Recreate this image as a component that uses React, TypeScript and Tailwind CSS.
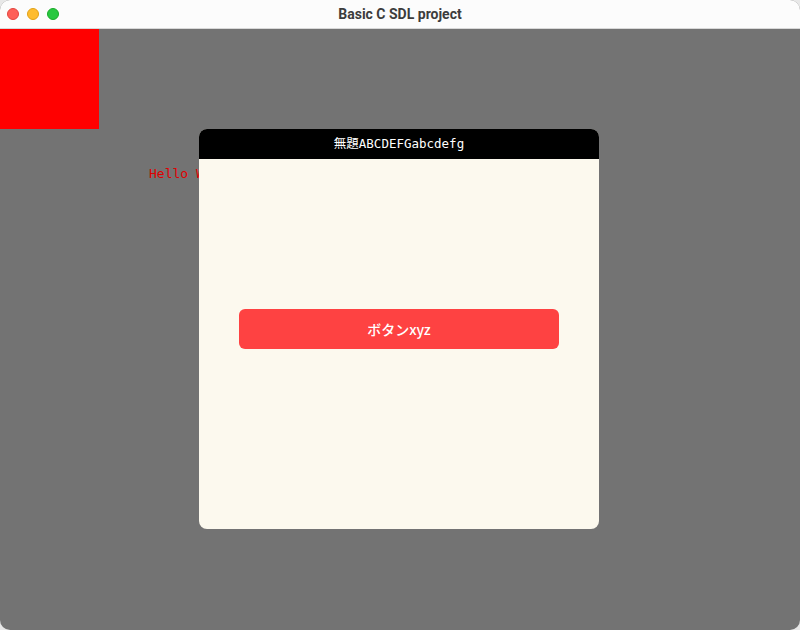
import React from 'react';

const mono = { fontFamily: '"DejaVu Sans Mono", "Noto Sans CJK JP", monospace' };

const TrafficLights = () => (
  <div className="flex items-center gap-[8px] pl-[7px]">
    <span className="w-[12px] h-[12px] rounded-full bg-[#fe5f57] border border-[#e2463f]" />
    <span className="w-[12px] h-[12px] rounded-full bg-[#febc2e] border border-[#e1a116]" />
    <span className="w-[12px] h-[12px] rounded-full bg-[#28c840] border border-[#1aab29]" />
  </div>
);

const Dialog = () => (
  <div className="absolute left-[199px] top-[100px] w-[400px] h-[400px] rounded-[8px] overflow-hidden flex flex-col bg-[#fcf9ee]">
    <div
      className="h-[30px] bg-black text-white text-[12.5px] flex items-center justify-center"
      style={mono}
    >
      無題ABCDEFGabcdefg
    </div>
    <div className="flex-1 flex items-center justify-center pb-[30px]">
      <button
        className="w-[320px] h-[40px] rounded-[6px] bg-[#fe4242] text-white text-[14px] font-medium"
        style={{ fontFamily: '"Noto Sans CJK JP", "Noto Sans", sans-serif' }}
      >
        ボタンxyz
      </button>
    </div>
  </div>
);

export default function App() {
  return (
    <div className="w-[800px] h-[630px] bg-[#e8e8e8] overflow-hidden">
      <div className="w-[800px] h-[630px] rounded-[10px] overflow-hidden flex flex-col bg-[#737373]">
        <div className="h-[29px] shrink-0 bg-[#fcfcfc] border-b border-[#d8d8d8] relative flex items-center">
          <TrafficLights />
          <div
            className="absolute inset-0 flex items-center justify-center text-[14px] font-bold text-[#3c3c3c]"
            style={{ fontFamily: 'Roboto, "Liberation Sans", sans-serif' }}
          >
            Basic C SDL project
          </div>
        </div>
        <div className="flex-1 relative">
          <div className="w-[99px] h-[100px] bg-[#ff0000]" />
          <div className="absolute left-[149px] top-[137px] text-[13px] leading-[16px] text-[#e00000]" style={mono}>
            Hello World
          </div>
          <Dialog />
        </div>
      </div>
    </div>
  );
}
